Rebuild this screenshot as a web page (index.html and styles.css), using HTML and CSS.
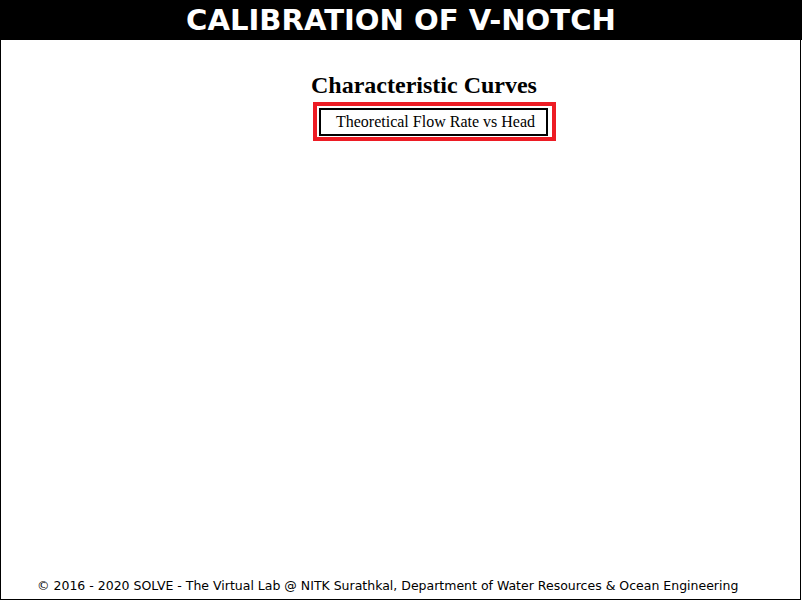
FILE: index.html
```html
<!DOCTYPE html>
<html lang="en">
<head>
<meta charset="utf-8">
<title>Calibration of V-Notch</title>
<link rel="stylesheet" href="styles.css">
</head>
<body>
<header class="topbar">
  <h1 class="title">CALIBRATION OF V-NOTCH</h1>
</header>
<div class="page">
  <main class="content">
    <h2 class="section-title">Characteristic Curves</h2>
    <div class="plot-select">
      <button class="plot-btn" type="button">Theoretical Flow Rate vs Head</button>
    </div>
  </main>
  <footer class="footer">© 2016 - 2020 SOLVE - The Virtual Lab @ NITK Surathkal, Department of Water Resources &amp; Ocean Engineering</footer>
</div>
</body>
</html>
```
FILE: styles.css
```css
html, body {
  margin: 0;
  padding: 0;
  background: #fff;
}
body {
  width: 802px;
  height: 602px;
  overflow: hidden;
}
.topbar {
  background: #000;
  height: 40px;
  display: flex;
  align-items: center;
  justify-content: center;
}
.title {
  margin: 0;
  color: #fff;
  font-family: "DejaVu Sans", Verdana, sans-serif;
  font-weight: bold;
  font-size: 29.1px;
  line-height: 40px;
  letter-spacing: 0;
}
.page {
  width: 801px;
  height: 560px;
  box-sizing: border-box;
  border: 1px solid #000;
  border-top: none;
  display: flex;
  flex-direction: column;
}
.content {
  flex: 1;
  display: flex;
  flex-direction: column;
  align-items: center;
  padding-left: 47px;
  padding-top: 31px;
}
.section-title {
  margin: 0 0 3px 0;
  font-family: "Liberation Serif", "Times New Roman", serif;
  font-weight: bold;
  font-size: 24px;
  line-height: 28px;
  color: #000;
}
.plot-select {
  border: 4px solid #ed1c24;
  padding: 2px 4px 1px 2px;
  margin-left: 21px;
  display: flex;
}
.plot-btn {
  margin: 0;
  background: #fff;
  border: 2px solid #000;
  padding: 2px 11px 2px 15px;
  font-family: "Liberation Serif", "Times New Roman", serif;
  font-size: 16px;
  line-height: 20px;
  color: #000;
  cursor: pointer;
}
.footer {
  padding: 0 0 6px 36px;
  font-family: "DejaVu Sans", Tahoma, sans-serif;
  font-size: 12.5px;
  line-height: 14px;
  color: #000;
}
```
